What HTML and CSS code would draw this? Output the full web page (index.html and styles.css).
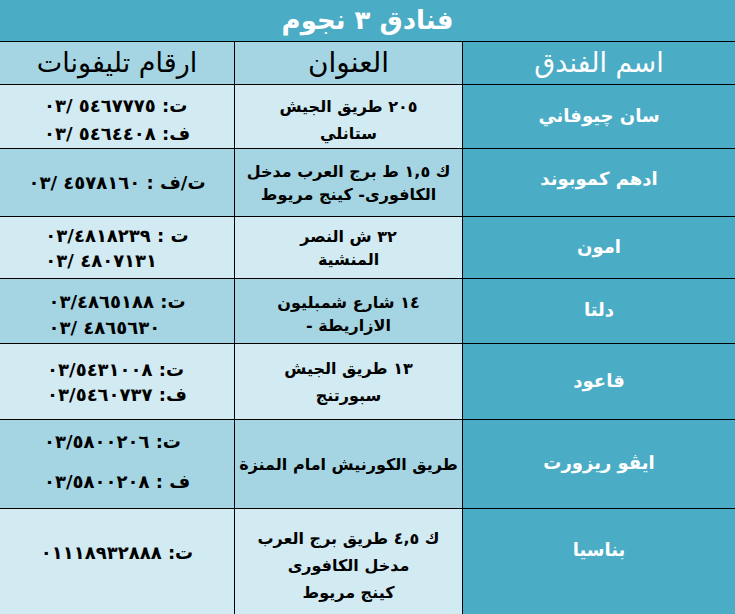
FILE: index.html
```html
<!DOCTYPE html>
<html lang="ar">
<head>
<meta charset="utf-8">
<title>فنادق ٣ نجوم</title>
<link rel="stylesheet" href="styles.css">
</head>
<body>
<div class="sheet">
  <div class="title">فنادق ٣ نجوم</div>

  <div class="row head">
    <div class="cell name">اسم الفندق</div>
    <div class="cell addr">العنوان</div>
    <div class="cell phone">ارقام تليفونات</div>
  </div>

  <div class="row light r1">
    <div class="cell name">سان چيوفاني</div>
    <div class="cell addr"><p>٢٠٥ طريق الجيش</p><p>ستانلي</p></div>
    <div class="cell phone"><div class="nums"><span class="ln">٠٣/ ٥٤٦٧٧٧٥ :ت</span><span class="ln">٠٣/ ٥٤٦٤٤٠٨ :ف</span></div></div>
  </div>

  <div class="row mid r2">
    <div class="cell name">ادهم كموبوند</div>
    <div class="cell addr"><p>ك ١,٥ ط برج العرب مدخل</p><p>الكافورى- كينج مريوط</p></div>
    <div class="cell phone"><div class="nums"><span class="ln">٠٣/ ٤٥٧٨١٦٠ : ف/ت</span></div></div>
  </div>

  <div class="row light r3">
    <div class="cell name">امون</div>
    <div class="cell addr"><p>٣٢ ش النصر</p><p>المنشية</p></div>
    <div class="cell phone"><div class="nums"><span class="ln">٠٣/٤٨١٨٢٣٩ : ت</span><span class="ln">٠٣/ ٤٨٠٧١٣١</span></div></div>
  </div>

  <div class="row mid r4">
    <div class="cell name">دلتا</div>
    <div class="cell addr"><p>١٤ شارع شمبليون</p><p>الازاريطة -</p></div>
    <div class="cell phone"><div class="nums"><span class="ln">٠٣/٤٨٦٥١٨٨ :ت</span><span class="ln">٠٣/ ٤٨٦٥٦٣٠</span></div></div>
  </div>

  <div class="row light r5">
    <div class="cell name">قاعود</div>
    <div class="cell addr"><p>١٣ طريق الجيش</p><p>سبورتنج</p></div>
    <div class="cell phone"><div class="nums"><span class="ln">٠٣/٥٤٣١٠٠٨ :ت</span><span class="ln">٠٣/٥٤٦٠٧٣٧ :ف</span></div></div>
  </div>

  <div class="row mid r6">
    <div class="cell name">ايڤو ريزورت</div>
    <div class="cell addr"><p>طريق الكورنيش امام المنزة</p></div>
    <div class="cell phone"><div class="nums"><span class="ln">٠٣/٥٨٠٠٢٠٦ :ت</span><span class="ln gap">٠٣/٥٨٠٠٢٠٨ : ف</span></div></div>
  </div>

  <div class="row light r7">
    <div class="cell name">بناسيا</div>
    <div class="cell addr"><p>ك ٤,٥ طريق برج العرب</p><p>مدخل الكافورى</p><p>كينج مريوط</p></div>
    <div class="cell phone"><div class="nums"><span class="ln">٠١١١٨٩٣٢٨٨٨ :ت</span></div></div>
  </div>
</div>
</body>
</html>
```

FILE: styles.css
```css
html, body {
  margin: 0;
  padding: 0;
  background: #ffffff;
}

body {
  font-family: "DejaVu Sans", sans-serif;
  color: #000000;
}

.sheet {
  width: 735px;
  direction: rtl;
}

.title {
  box-sizing: border-box;
  height: 42px;
  background: #4bacc6;
  border-bottom: 1px solid #000;
  color: #ffffff;
  font-weight: bold;
  font-size: 26px;
  display: flex;
  align-items: center;
  justify-content: center;
  padding-bottom: 2px;
}

.row {
  box-sizing: border-box;
  display: grid;
  grid-template-columns: 1fr 228px 234px;
  border-bottom: 1px solid #000;
}

.cell {
  display: flex;
  flex-direction: column;
  align-items: center;
  justify-content: center;
  min-width: 0;
  overflow: hidden;
}

.cell p {
  margin: 0;
}

.name {
  background: #4bacc6;
  color: #ffffff;
  font-weight: bold;
  font-size: 18px;
  border-left: 1px solid #000;
  padding-bottom: 3px;
}

.addr {
  border-left: 1px solid #000;
  font-weight: bold;
  font-size: 16px;
  line-height: 23px;
  text-align: center;
  white-space: nowrap;
}

.phone {
  font-weight: bold;
  font-size: 18px;
  line-height: 25px;
}

.nums {
  text-align: left;
}

.ln {
  display: block;
  direction: ltr;
  unicode-bidi: bidi-override;
  white-space: pre;
  letter-spacing: 1.5px;
}

.light .addr,
.light .phone {
  background: #d2eaf1;
}

.mid .addr,
.mid .phone {
  background: #a5d5e2;
}

/* header row */
.head {
  height: 43px;
}

.head .addr,
.head .phone {
  background: #a5d5e2;
  font-weight: normal;
  padding-bottom: 2px;
}

.head .addr {
  font-size: 28px;
}

.head .phone {
  font-size: 27px;
}

.head .name {
  font-weight: normal;
  font-size: 27px;
  padding-bottom: 2px;
}

/* body rows */
.r1 { height: 64px; }
.r1 .addr { line-height: 27px; padding-top: 6px; }
.r1 .phone { line-height: 28px; padding-top: 6px; }

.r2 { height: 68px; }
.r2 .name { padding-bottom: 8px; }

.r3 { height: 62px; }

.r4 { height: 65px; }
.r4 .addr { padding-top: 6px; }
.r4 .phone { line-height: 26px; padding-top: 8px; }

.r5 { height: 76px; }
.r5 .addr { line-height: 27px; }

.r6 { height: 89px; }
.r6 .phone { padding-bottom: 6px; }
.r6 .gap { margin-top: 15px; }

.r7 {
  height: 105px;
  border-bottom: none;
}
.r7 .cell {
  justify-content: flex-start;
}
.r7 .name { padding-top: 30px; }
.r7 .phone { padding-top: 31px; }
.r7 .addr {
  line-height: 27px;
  padding-top: 16px;
}
```
